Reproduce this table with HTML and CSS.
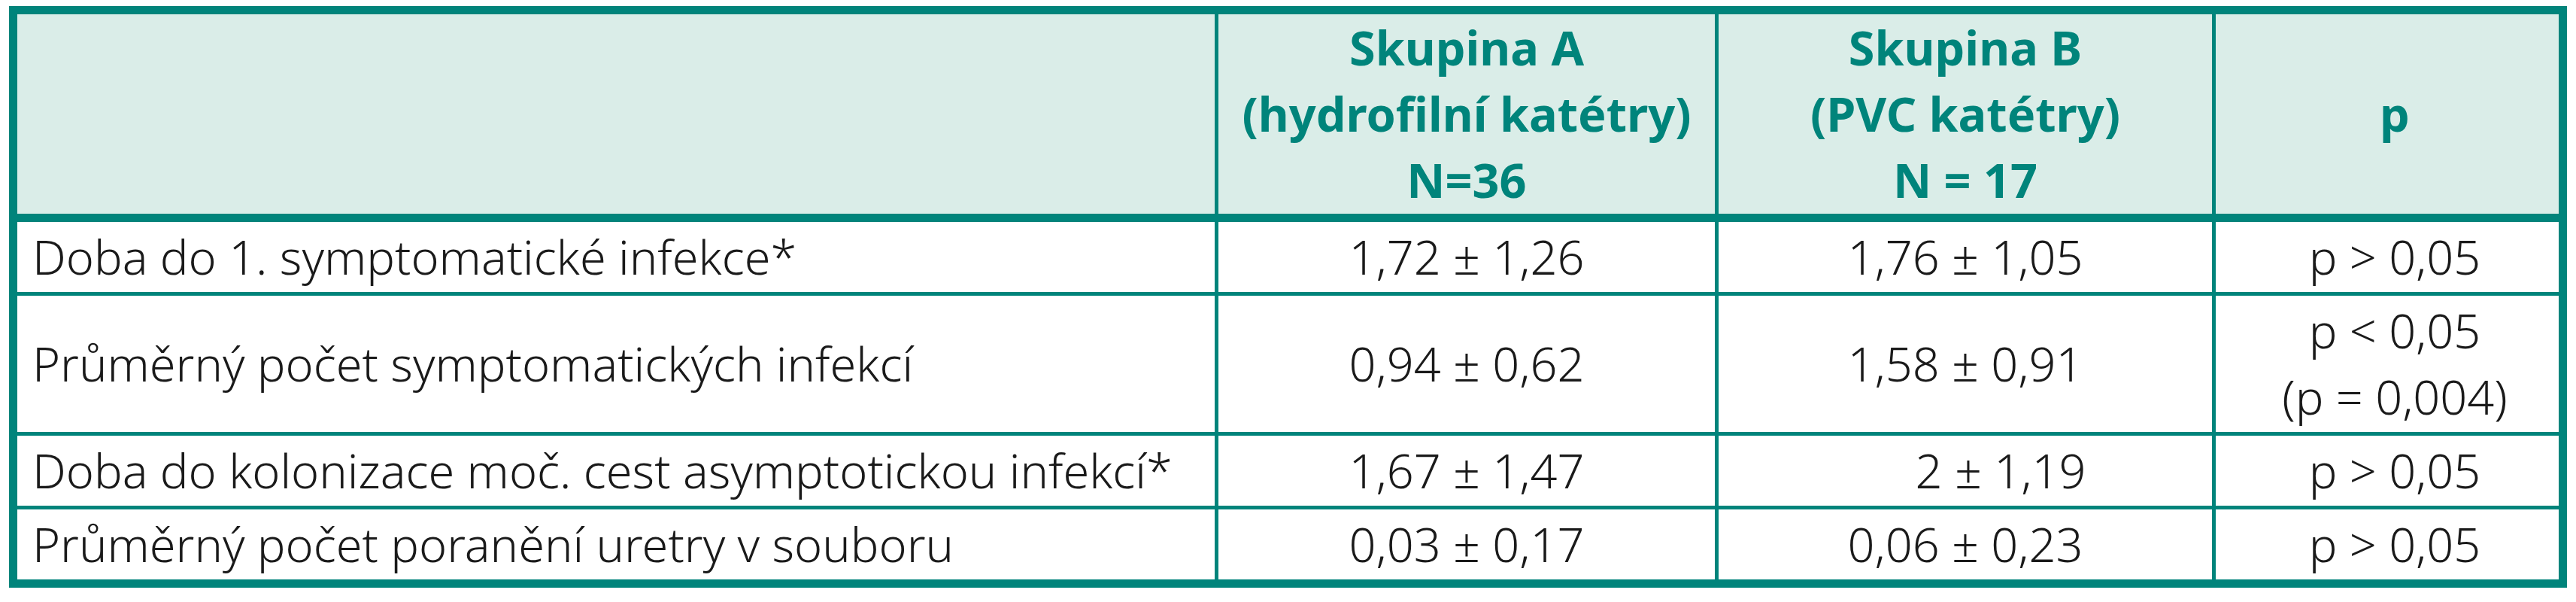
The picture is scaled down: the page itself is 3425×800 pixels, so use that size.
FILE: index.html
```html
<!DOCTYPE html>
<html lang="cs">
<head>
<meta charset="utf-8">
<title>Tabulka</title>
<link rel="stylesheet" href="styles.css">
</head>
<body>
<table class="results">
  <thead>
    <tr>
      <th class="c-label"></th>
      <th class="c-a">Skupina A<br>(hydrofilní katétry)<br>N=36</th>
      <th class="c-b">Skupina B<br>(PVC katétry)<br>N = 17</th>
      <th class="c-p">p</th>
    </tr>
  </thead>
  <tbody>
    <tr>
      <td class="label">Doba do 1. symptomatické infekce*</td>
      <td>1,72 ± 1,26</td>
      <td>1,76 ± 1,05</td>
      <td class="pval">p &gt; 0,05</td>
    </tr>
    <tr>
      <td class="label">Průměrný počet symptomatických infekcí</td>
      <td>0,94 ± 0,62</td>
      <td>1,58 ± 0,91</td>
      <td class="pval">p &lt; 0,05<br>(p = 0,004)</td>
    </tr>
    <tr>
      <td class="label">Doba do kolonizace moč. cest asymptotickou infekcí*</td>
      <td>1,67 ± 1,47</td>
      <td class="shift">2 ± 1,19</td>
      <td class="pval">p &gt; 0,05</td>
    </tr>
    <tr>
      <td class="label">Průměrný počet poranění uretry v souboru</td>
      <td>0,03 ± 0,17</td>
      <td>0,06 ± 0,23</td>
      <td class="pval">p &gt; 0,05</td>
    </tr>
  </tbody>
</table>
</body>
</html>
```
FILE: styles.css
```css
html, body {
  margin: 0;
  padding: 0;
  background: #ffffff;
}

body {
  padding: 8px 0 0 12px;
  font-family: "Noto Sans", "Open Sans", "DejaVu Sans", sans-serif;
}

.results {
  border-collapse: separate;
  border-spacing: 0;
  table-layout: fixed;
  width: 3401px;
  border: 11px solid #00847b;
  border-right-width: 11px;
}

.results th,
.results td {
  box-sizing: border-box;
  padding: 2px 0 3px;
  line-height: 88px;
  font-size: 63px;
  text-align: center;
  vertical-align: middle;
  border-right: 5px solid #00847b;
  border-bottom: 5px solid #00847b;
}

.results th:last-child,
.results td:last-child {
  border-right: none;
}

.results tbody tr:last-child td {
  border-bottom: none;
}

.results th {
  background: #daede8;
  color: #00847b;
  font-weight: 700;
  font-stretch: semi-condensed;
  padding: 0 0 1px;
  border-bottom-width: 11px;
}

.results td {
  color: #1a1a1a;
  font-weight: 300;
  font-stretch: semi-condensed;
}

.c-label { width: 1597px; }
.c-a { width: 665px; }
.c-b { width: 661px; }
.c-p { width: 456px; }

.results .label {
  text-align: left;
  padding-left: 20px;
}

.results .c-p,
.results .pval {
  padding-left: 20px;
}

.results .shift {
  padding-left: 94px;
}
```
